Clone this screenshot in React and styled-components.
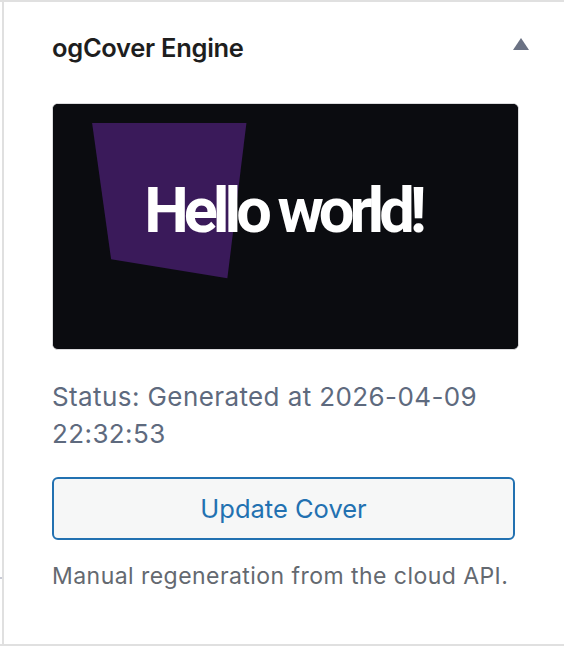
import styled, { createGlobalStyle } from 'styled-components';

const GlobalStyle = createGlobalStyle`
    html, body {
        margin: 0;
        padding: 0;
        background: #fff;
    }
    body {
        font-family: Inter, "Noto Sans", sans-serif;
        -webkit-font-smoothing: antialiased;
    }
`;

const Frame = styled.div`
    display: flex;
    height: 646px;
    box-sizing: border-box;
    border-top: 2px solid #e0e0e0;
    border-bottom: 2px solid #e0e0e0;
`;

const Gutter = styled.div`
    width: 2px;
    display: flex;
    flex-direction: column;
`;

const Tick = styled.span`
    display: block;
    margin-top: 575px;
    height: 2px;
    background: #c9cbd6;
`;

const Panel = styled.section`
    flex: 1;
    border-left: 2px solid #e0e0e0;
`;

const PanelHeader = styled.header`
    display: flex;
    align-items: center;
    justify-content: space-between;
    height: 90px;
    padding: 0 35px 0 48px;
`;

const PanelTitle = styled.h2`
    margin: 0;
    font-size: 25.5px;
    font-weight: 600;
    color: #1e1e1e;
    letter-spacing: -0.3px;
`;

const Toggle = styled.span`
    display: flex;
    padding-bottom: 6px;
`;

const PanelBody = styled.div`
    padding: 11px 45px 0 48px;
`;

const Preview = styled.div`
    border: 1px solid #dcdcde;
    border-radius: 6px;
    overflow: hidden;
    background: #0b0c10;
    line-height: 0;

    svg {
        display: block;
        width: 100%;
        height: auto;
    }
`;

const Status = styled.p`
    margin: 28px 0 0;
    font-size: 26px;
    line-height: 37px;
    letter-spacing: 0.4px;
    color: #5e6a7e;
`;

const UpdateButton = styled.button`
    display: block;
    width: calc(100% - 4px);
    height: 63px;
    margin-top: 25px;
    border: 2px solid #2271b1;
    border-radius: 6px;
    background: #f6f7f7;
    color: #2271b1;
    font-family: inherit;
    font-size: 25.5px;
    cursor: pointer;
`;

const Help = styled.p`
    margin: 20px 0 0;
    font-size: 23px;
    line-height: 32px;
    letter-spacing: 0.45px;
    color: #646970;
`;

function CoverPreview() {
    return (
        <Preview>
            <svg viewBox="0 0 464 244" xmlns="http://www.w3.org/2000/svg">
                <rect width="464" height="244" fill="#0b0c10" />
                <polygon points="39,19 193,19 174,174 58,155" fill="#3a1a5a" />
                <text
                    x="91"
                    y="128"
                    fill="#ffffff"
                    fontFamily="Roboto, 'Liberation Sans', sans-serif"
                    fontWeight="700"
                    fontSize="63"
                    textLength="282"
                    lengthAdjust="spacing"
                >
                    Hello world!
                </text>
            </svg>
        </Preview>
    );
}

export default function App() {
    return (
        <>
            <GlobalStyle />
            <Frame>
                <Gutter>
                    <Tick />
                </Gutter>
                <Panel>
                    <PanelHeader>
                        <PanelTitle>ogCover Engine</PanelTitle>
                        <Toggle>
                            <svg width="16" height="12" viewBox="0 0 16 12">
                                <polygon points="8,0 16,12 0,12" fill="#6b7284" />
                            </svg>
                        </Toggle>
                    </PanelHeader>
                    <PanelBody>
                        <CoverPreview />
                        <Status>Status: Generated at 2026-04-09 22:32:53</Status>
                        <UpdateButton type="button">Update Cover</UpdateButton>
                        <Help>Manual regeneration from the cloud API.</Help>
                    </PanelBody>
                </Panel>
            </Frame>
        </>
    );
}
